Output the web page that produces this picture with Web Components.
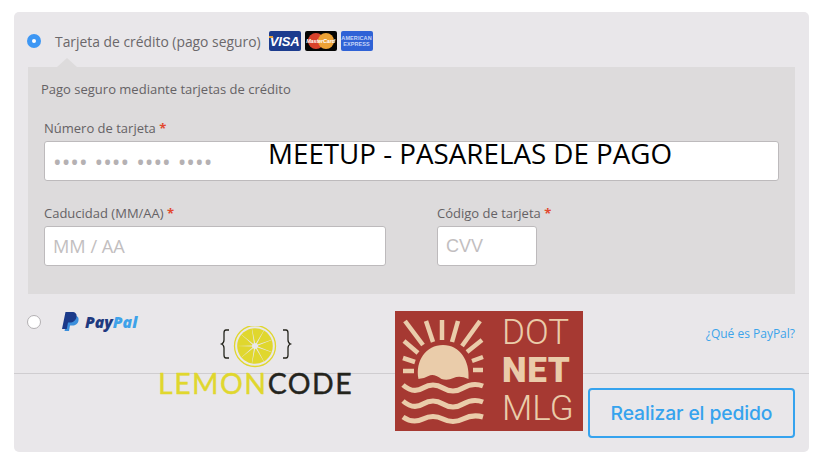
<!DOCTYPE html>
<html lang="es">
<head>
<meta charset="utf-8">
<title>Meetup - Pasarelas de pago</title>
<style>
  html, body { margin: 0; background: #fff; }
  body { font-family: "Open Sans", sans-serif; }
</style>
</head>
<body>
<checkout-card>
  <pay-option slot="card-option" checked>
    Tarjeta de crédito (pago seguro)
    <span slot="extra" style="display:flex;gap:4px">
      <card-badge kind="visa"></card-badge>
      <card-badge kind="mc"></card-badge>
      <card-badge kind="amex"></card-badge>
    </span>
  </pay-option>
  <card-form slot="card-form"></card-form>
</checkout-card>

<script>
// radio + etiqueta
class RadioDot extends HTMLElement {
  connectedCallback() {
    this.attachShadow({ mode: "open" }).innerHTML = `
      <style>
        :host { display: block; width: 14px; height: 14px; border-radius: 50%; box-sizing: border-box;
                background: #fff; border: 1px solid #b3b0b3; flex: none; }
        :host([checked]) { background: #3d97f4; border: 0; display: flex; align-items: center; justify-content: center; }
        i { display: none; width: 4px; height: 4px; border-radius: 50%; background: #fff; }
        :host([checked]) i { display: block; }
      </style><i></i>`;
  }
}
customElements.define("radio-dot", RadioDot);

class PayOption extends HTMLElement {
  connectedCallback() {
    const on = this.hasAttribute("checked") ? "checked" : "";
    this.attachShadow({ mode: "open" }).innerHTML = `
      <style>
        :host { display: flex; align-items: center; height: 24px; color: #6b686b; font-size: 13.87px; }
        radio-dot { margin-right: 14px; }
        .extra { margin-left: 8px; display: flex; }
      </style>
      <radio-dot ${on}></radio-dot>
      <slot></slot>
      <span class="extra"><slot name="extra"></slot></span>`;
  }
}
customElements.define("pay-option", PayOption);

class CardBadge extends HTMLElement {
  connectedCallback() {
    const kind = this.getAttribute("kind");
    const inner = {
      visa: `<b class="visa">VISA</b>`,
      mc: `<svg width="32" height="20" viewBox="0 0 32 20"><circle cx="11" cy="10" r="8" fill="#d9422b"/><circle cx="21" cy="10" r="8" fill="#eda235"/></svg><b class="mc">MasterCard</b>`,
      amex: `<b class="amex">AMERICAN<br>EXPRESS</b>`
    }[kind];
    const bg = { visa: "#1c3c8e", mc: "#050505", amex: "#2f62d6" }[kind];
    this.attachShadow({ mode: "open" }).innerHTML = `
      <style>
        :host { display: flex; position: relative; width: 32px; height: 20px; border-radius: 2px; overflow: hidden;
                align-items: center; justify-content: center; background: ${bg}; }
        svg { position: absolute; left: 0; top: 0; }
        b { position: relative; font-family: "Liberation Sans", sans-serif; color: #fff; }
        .visa { font-size: 13px; font-style: italic; font-weight: 700; letter-spacing: -.2px; }
        .visa::before { content: ""; position: absolute; left: -2px; top: 2px; width: 5px; height: 2px; background: #e9a23b; }
        .mc { font-size: 5.5px; font-style: italic; letter-spacing: -.15px; }
        .amex { font-size: 5.5px; line-height: 6.5px; font-weight: 700; color: #c6d6f6; text-align: center; letter-spacing: .1px; }
      </style>${inner}`;
  }
}
customElements.define("card-badge", CardBadge);

// label + caja de input
class TextField extends HTMLElement {
  connectedCallback() {
    const w = this.getAttribute("width");
    this.attachShadow({ mode: "open" }).innerHTML = `
      <style>
        :host { display: block; ${w ? `width:${w}px;flex:none;` : ""} }
        label { display: block; height: 18px; margin-bottom: 3px; line-height: 16px; font-size: 13px; color: #656265; white-space: nowrap; }
        em { font-style: normal; font-weight: 700; color: #e2492f; }
        .box { box-sizing: border-box; height: 40px; display: flex; align-items: center; padding: 0 8px 1px;
               background: #fff; border: 1px solid #bdbabc; border-radius: 3px; color: #c2bec0; font-size: 18.2px; }
        :host([dots]) .box { font-size: 23px; word-spacing: 1px; padding: 2px 0 0 8px; color: #b5b1b3; }
        :host([thin]) .box { font-family: "Liberation Sans", sans-serif; font-size: 18px; padding: 0 8px; }
      </style>
      <label>${this.getAttribute("label")} <em>*</em></label>
      <div class="box">${this.getAttribute("hint")}</div>`;
  }
}
customElements.define("text-field", TextField);

class CardForm extends HTMLElement {
  connectedCallback() {
    this.attachShadow({ mode: "open" }).innerHTML = `
      <style>
        :host { display: block; position: relative; box-sizing: border-box; height: 227px; margin: 14px 14px 0;
                padding: 12px 16px 0; background: #dddbdc; }
        :host::before { content: ""; position: absolute; left: 29px; top: -9px; width: 0; height: 0;
                border: solid transparent; border-width: 0 10px 9px; border-bottom-color: #dddbdc; }
        p { margin: 0 0 0 -3px; height: 20px; line-height: 20px; font-size: 13px; color: #656265; }
        .first { margin-top: 21px; }
        .row { display: flex; gap: 51px; margin-top: 24px; }
      </style>
      <p>Pago seguro mediante tarjetas de crédito</p>
      <text-field class="first" dots label="Número de tarjeta" hint="•••• •••• •••• ••••"></text-field>
      <div class="row">
        <text-field width="342" label="Caducidad (MM/AA)" hint="MM / AA"></text-field>
        <text-field width="100" thin label="Código de tarjeta" hint="CVV"></text-field>
      </div>`;
  }
}
customElements.define("card-form", CardForm);

class PaypalLogo extends HTMLElement {
  connectedCallback() {
    this.attachShadow({ mode: "open" }).innerHTML = `
      <style>
        :host { display: flex; align-items: center; gap: 6px; font: italic 800 15.7px "Open Sans", sans-serif; }
        .a { color: #1f3a80; } .b { color: #3ea2e9; }
      </style>
      <svg width="17" height="20" viewBox="0 0 17 20">
        <path d="M6 4h7c3 0 4 2 3.500 4.500C16 12 13.500 13.500 10.500 13.500H8L7 19H2.500z" fill="#3b8fdc"/>
        <path d="M3.500 0H10c3.500 0 5 2 4.500 5C14 8.500 11 10.500 8 10.500H6L4.800 17H0z" fill="#1b3a8a"/>
      </svg>
      <span><span class="a">Pay</span><span class="b">Pal</span></span>`;
  }
}
customElements.define("paypal-logo", PaypalLogo);

class LemonLogo extends HTMLElement {
  connectedCallback() {
    let slices = "";
    for (let i = 0; i < 9; i++) {
      slices += `<path transform="rotate(${i * 40 + 10} 97 20)" d="M96.500 17 L91 3.200 Q97 1.200 103 3.200 L97.500 17 Z" fill="#e0d72e"/>`;
    }
    this.attachShadow({ mode: "open" }).innerHTML = `
      <style>
        :host { display: block; width: 194px; }
        svg { display: block; }
        div { margin-top: -2px; font: 400 28.500px/27px Lato, sans-serif; letter-spacing: 1.5px; white-space: nowrap; color: #e0d72e; -webkit-text-stroke: .4px; }
        span { color: #24241c; }
      </style>
      <svg width="194" height="46" viewBox="0 0 194 46">
        <circle cx="97" cy="20" r="20.500" fill="none" stroke="#e0d72e" stroke-width="1.300"/>
        ${slices}
        <path d="M71 4h-3q-2 0-2 3v7q0 3-2.500 4 2.500 1 2.500 4v7q0 3 2 3h3M125 4h3q2 0 2 3v7q0 3 2.500 4-2.500 1-2.500 4v7q0 3-2 3h-3" fill="none" stroke="#24241c" stroke-width="1.300"/>
      </svg>
      <div>LEMON<span>CODE</span></div>`;
  }
}
customElements.define("lemon-logo", LemonLogo);

class DotnetLogo extends HTMLElement {
  connectedCallback() {
    const rays = [[10,10,28,34],[31,10,38,31],[47,9,47,29],[63,10,57,31],[85,10,67,35],[9,30,23,42],[8,47,20,51],[8,60,19,60],[87,29,72,41],[88,46,77,50],[88,59,78,59]];
    this.attachShadow({ mode: "open" }).innerHTML = `
      <style>
        :host { display: flex; box-sizing: border-box; width: 188px; height: 120px; background: #a63932; color: #eaccaa;
                font: 300 35px/38px Roboto, sans-serif; }
        svg { flex: none; }
        div { margin: 3px 0 0 9px; }
        b { font-weight: 900; display: block; letter-spacing: .6px; }
      </style>
      <svg width="98" height="120" viewBox="0 0 98 120">
        <g stroke="#eaccaa" stroke-width="4.500" fill="none">
          ${rays.map(r => `<line x1="${r[0]}" y1="${r[1]}" x2="${r[2]}" y2="${r[3]}"/>`).join("")}
          <g stroke-width="5">
            <path d="M8 74q10 9 20 3t20 0 20 0 20-2"/>
            <path d="M8 90q10 9 20 3t20 0 20 0 20-2"/>
            <path d="M8 106q10 7 20 2t20 0 20 0 20-2"/>
          </g>
        </g>
        <path d="M23.500 68C20 50 31 34 48 34s27 16 25.500 34q-9-4-15-1t-12 1q-8-6-13-3t-10.500 3z" fill="#eaccaa"/>
      </svg>
      <div>DOT<b>NET</b>MLG</div>`;
  }
}
customElements.define("dotnet-logo", DotnetLogo);

// tarjeta principal
class CheckoutCard extends HTMLElement {
  connectedCallback() {
    this.attachShadow({ mode: "open" }).innerHTML = `
      <style>
        :host { display: block; position: relative; box-sizing: border-box; width: 795px; height: 440px;
                margin: 12px 0 0 14px; background: #e9e7ea; border-radius: 5px; overflow: hidden; }
        .top { padding: 17px 13px 0; }
        .paypal { display: flex; align-items: center; height: 24px; margin-top: 16px; padding: 0 14px 0 13px; }
        .paypal radio-dot { margin-right: 21px; }
        .paypal a { margin: 22px 0 0 auto; font-size: 12px; color: #3ca4ea; }
        hr { margin: 39px 0 0; border: 0; height: 1px; background: #cfcdd0; }
        .foot { display: flex; justify-content: flex-end; padding: 14px 14px 0; }
        button { box-sizing: border-box; width: 207px; height: 50px; background: transparent; border: 2px solid #36a3ee;
                 border-radius: 4px; color: #36a3ee; font: 500 19.300px Inter, sans-serif; letter-spacing: -.1px; }
        .title { position: absolute; left: 254px; top: 122px; font-size: 27.750px; line-height: 38px; color: #000; white-space: nowrap; }
        lemon-logo { position: absolute; left: 144px; top: 314px; }
        dotnet-logo { position: absolute; left: 381px; top: 299px; }
      </style>
      <div class="top"><slot name="card-option"></slot></div>
      <slot name="card-form"></slot>
      <div class="paypal">
        <radio-dot></radio-dot>
        <paypal-logo></paypal-logo>
        <a>¿Qué es PayPal?</a>
      </div>
      <hr>
      <div class="foot"><button>Realizar el pedido</button></div>
      <div class="title">MEETUP - PASARELAS DE PAGO</div>
      <lemon-logo></lemon-logo>
      <dotnet-logo></dotnet-logo>`;
  }
}
customElements.define("checkout-card", CheckoutCard);
</script>
</body>
</html>
